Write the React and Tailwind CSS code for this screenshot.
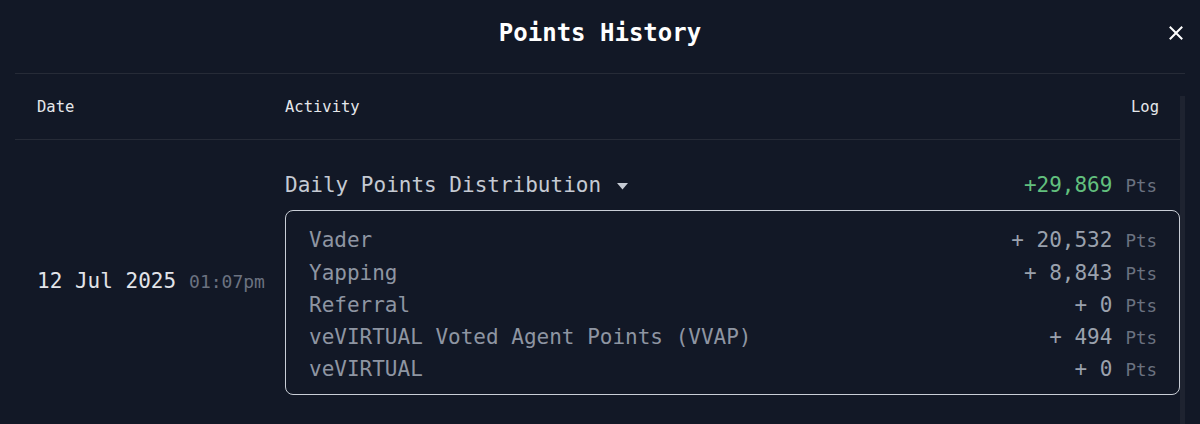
import React from 'react'

const mono = { fontFamily: '"DejaVu Sans Mono", "Liberation Mono", monospace' }

const breakdown = [
  { label: 'Vader', value: '20,532' },
  { label: 'Yapping', value: '8,843' },
  { label: 'Referral', value: '0' },
  { label: 'veVIRTUAL Voted Agent Points (VVAP)', value: '494' },
  { label: 'veVIRTUAL', value: '0' },
]

const CloseIcon = () => (
  <svg width="24" height="24" viewBox="0 0 24 24" fill="none">
    <path d="M6.5 6.5 L17.5 17.5 M17.5 6.5 L6.5 17.5" stroke="#ffffff" strokeWidth="2" strokeLinecap="square" />
  </svg>
)

const Caret = () => (
  <svg width="11" height="7" viewBox="0 0 11 7" className="ml-[16px]">
    <path d="M0 0 H11 L5.5 6.5 Z" fill="#c5cad3" />
  </svg>
)

export default function App() {
  return (
    <div className="w-[1200px] h-[424px] bg-[#121826] overflow-hidden" style={mono}>
      {/* Cabeçalho */}
      <div className="h-[73px] flex items-start px-[12px] pt-[19px]">
        <div className="w-[24px]" />
        <h1 className="flex-1 text-center text-[24px] leading-[28px] font-bold text-white">
          Points History
        </h1>
        <button className="w-[24px] h-[24px] mt-[2px] flex items-center justify-center">
          <CloseIcon />
        </button>
      </div>

      <div className="mx-[15px] border-t border-[#262b37] flex">
        <div className="flex-1">
          {/* Colunas */}
          <div className="h-[66px] flex items-center pl-[22px] pr-[21px] pt-[2px] border-b border-[#262b37] text-[15.5px] text-[#e5e7eb]">
            <div className="w-[248px]">Date</div>
            <div className="flex-1">Activity</div>
            <div>Log</div>
          </div>

          {/* Linha */}
          <div className="flex items-center pl-[22px] pt-[26px]">
            <div className="w-[248px] mt-[2px] flex items-baseline">
              <span className="text-[21px] text-[#e2e4e9]">12 Jul 2025</span>
              <span className="ml-[13px] text-[18px] text-[#6b7280]">01:07pm</span>
            </div>
            <div className="flex-1">
              <div className="h-[36px] pt-[4px] flex items-center justify-between pr-[23px]">
                <div className="flex items-center text-[21px] text-[#c5cad3]">
                  Daily Points Distribution
                  <Caret />
                </div>
                <div className="flex items-baseline">
                  <span className="text-[21px] text-[#62c07e]">+29,869</span>
                  <span className="ml-[13px] text-[17.5px] text-[#6b7280]">Pts</span>
                </div>
              </div>
              <div className="mt-[8px] border border-[#c9ced6] rounded-[8px] pl-[23px] pr-[22px] pt-[14px] pb-[8px]">
                {breakdown.map((item) => (
                  <div key={item.label} className="h-[32.25px] flex items-center justify-between">
                    <span className="text-[21px] text-[#8e95a2]">{item.label}</span>
                    <div className="flex items-baseline">
                      <span className="text-[21px] text-[#9aa1ad]">+ {item.value}</span>
                      <span className="ml-[13px] text-[17.5px] text-[#6b7280]">Pts</span>
                    </div>
                  </div>
                ))}
              </div>
            </div>
          </div>
        </div>
        {/* Barra de rolagem */}
        <div className="w-[5px] mt-[22px] h-[360px] bg-[#1e2330]" />
      </div>
    </div>
  )
}
